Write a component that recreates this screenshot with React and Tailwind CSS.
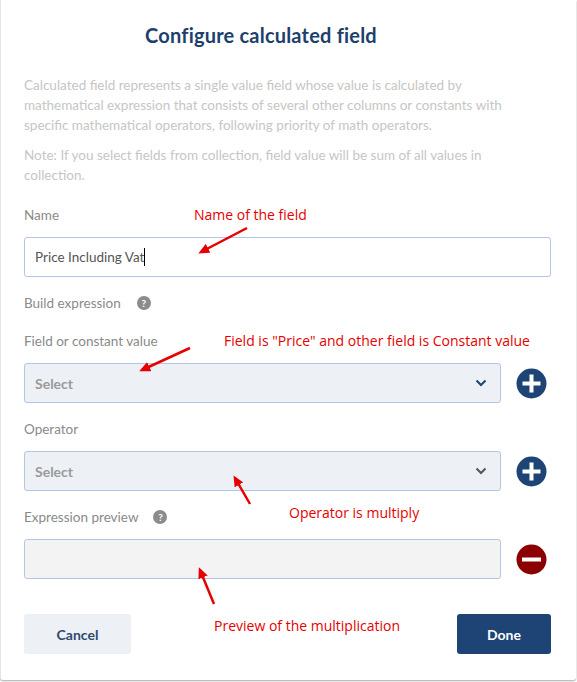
import React from "react";

function PlusIcon() {
  return (
    <svg width="31" height="31" viewBox="0 0 31 31">
      <circle cx="15.5" cy="15.5" r="15" fill="#1d4475" />
      <rect x="6.5" y="13.5" width="18" height="4" fill="#fff" />
      <rect x="13.5" y="6.5" width="4" height="18" fill="#fff" />
    </svg>
  );
}

function MinusIcon() {
  return (
    <svg width="31" height="31" viewBox="0 0 31 31">
      <circle cx="15.5" cy="15.5" r="15" fill="#8b0000" />
      <rect x="6" y="13.5" width="19" height="4" fill="#fff" />
    </svg>
  );
}

function Help() {
  return (
    <span className="inline-flex items-center justify-center w-[14px] h-[14px] rounded-full bg-[#8c8c8c] text-white text-[10px] font-bold leading-none">?</span>
  );
}

function Chevron({ color }) {
  return (
    <svg width="12" height="8" viewBox="0 0 12 8">
      <path d="M1.5 1.5 L6 6 L10.5 1.5" fill="none" stroke={color} strokeWidth="2" />
    </svg>
  );
}

function SelectRow({ chevron }) {
  return (
    <div className="flex items-center gap-[15px] pr-[4px]">
      <div className="flex-1 h-[40px] rounded-[3px] border border-[#b3c6e6] bg-[#edf0f5] flex items-center justify-between pl-[10px] pr-[13px]">
        <span className="text-[14px] font-bold text-[#9a9a9a]">Select</span>
        <Chevron color={chevron} />
      </div>
      <PlusIcon />
    </div>
  );
}

const annot = { fontFamily: "'Liberation Sans Narrow', 'Open Sans', sans-serif" };

export default function App() {
  return (
    <div className="w-[577px] h-[682px] bg-white" style={{ fontFamily: "Lato, 'Open Sans', sans-serif" }}>
      <div className="relative w-[576px] h-[680px] bg-white border-l border-[#e4e6ea] shadow-[0_1px_2px_rgba(0,0,0,0.35)] rounded-b-[3px] pl-[23px] pr-[25px] pt-[22px]">
        <h1 className="mr-[53px] text-center text-[20px] font-bold text-[#1c3f6e] leading-[26px] tracking-[0.2px]">Configure calculated field</h1>
        <p className="mt-[27px] w-[485px] text-[13.5px] leading-[20px] text-[#c6c6c6]">
          Calculated field represents a single value field whose value is calculated by mathematical expression that consists of several other columns or constants with specific mathematical operators, following priority of math operators.
        </p>
        <p className="mt-[10px] w-[485px] text-[13.5px] leading-[20px] text-[#c6c6c6]">
          Note: If you select fields from collection, field value will be sum of all values in collection.
        </p>

        <div className="mt-[20px] text-[13.5px] leading-[20px] text-[#8a8a8a]">Name</div>
        <div className="mt-[12px] h-[40px] rounded-[3px] border border-[#b3c6e6] flex items-center px-[10px] text-[13.5px] text-[#555]">
          Price Including Vat<span className="inline-block w-px h-[18px] bg-black"></span>
        </div>

        <div className="mt-[16px] flex items-center gap-[16px] text-[13.5px] leading-[20px] text-[#8a8a8a]">
          <span>Build expression</span>
          <Help />
        </div>

        <div className="mt-[18px] text-[13.5px] leading-[20px] text-[#8a8a8a]">Field or constant value</div>
        <div className="mt-[12px]">
          <SelectRow chevron="#1d4475" />
        </div>

        <div className="mt-[16px] text-[13.5px] leading-[20px] text-[#8a8a8a]">Operator</div>
        <div className="mt-[12px]">
          <SelectRow chevron="#555" />
        </div>

        <div className="mt-[16px] flex items-center gap-[15px] text-[13.5px] leading-[20px] text-[#8a8a8a]">
          <span>Expression preview</span>
          <Help />
        </div>
        <div className="mt-[12px] flex items-center gap-[15px] pr-[4px]">
          <div className="flex-1 h-[40px] rounded-[3px] border border-[#b3c6e6] bg-[#f3f3f3]"></div>
          <MinusIcon />
        </div>

        <div className="mt-[35px] flex justify-between">
          <button className="w-[107px] h-[40px] rounded-[3px] bg-[#edf0f5] text-[14px] font-bold text-[#2c4a70]">Cancel</button>
          <button className="w-[94px] h-[40px] rounded-[3px] bg-[#1d4475] text-[14px] font-bold text-white">Done</button>
        </div>

        {/* annotations */}
        <svg className="absolute left-0 top-0 pointer-events-none" width="577" height="682">
          <defs>
            <marker id="ah" markerWidth="11" markerHeight="10" refX="8" refY="5" orient="auto" markerUnits="userSpaceOnUse">
              <path d="M0 0 L11 5 L0 10 Z" fill="#e60000" />
            </marker>
          </defs>
          <g stroke="#e60000" strokeWidth="2.5" fill="none">
            <line x1="246" y1="228" x2="200" y2="252" markerEnd="url(#ah)" />
            <line x1="189" y1="348" x2="141" y2="370" markerEnd="url(#ah)" />
            <line x1="249" y1="504" x2="234" y2="478" markerEnd="url(#ah)" />
            <line x1="213" y1="604" x2="199" y2="570" markerEnd="url(#ah)" />
          </g>
        </svg>
        <div className="absolute left-[193px] top-[205px] text-[14px] leading-[20px] text-[#e60000]" style={annot}>Name of the field</div>
        <div className="absolute left-[223px] top-[331px] text-[14px] leading-[20px] text-[#e60000]" style={annot}>Field is "Price" and other field is Constant value</div>
        <div className="absolute left-[288px] top-[503px] text-[14px] leading-[20px] text-[#e60000]" style={annot}>Operator is multiply</div>
        <div className="absolute left-[213px] top-[616px] text-[14px] leading-[20px] text-[#e60000]" style={annot}>Preview of the multiplication</div>
      </div>
    </div>
  );
}
